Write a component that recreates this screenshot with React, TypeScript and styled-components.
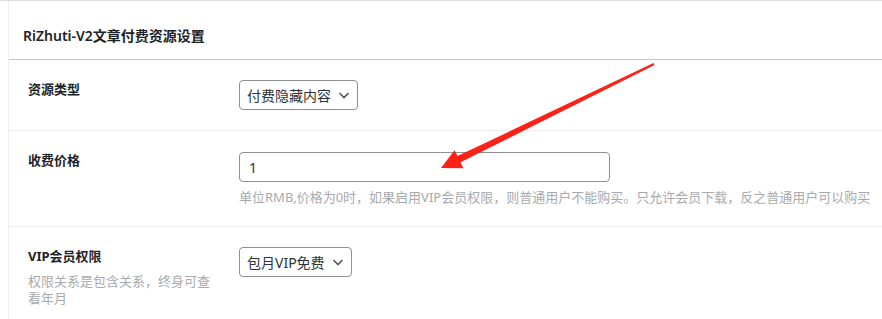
import React from "react";
import styled, { createGlobalStyle } from "styled-components";

const GlobalStyle = createGlobalStyle`
  html, body {
    margin: 0;
    padding: 0;
    background: #ffffff;
  }
  body {
    font-family: "Noto Sans", "Noto Sans CJK SC", sans-serif;
    color: #23282d;
  }
`;

const Page = styled.div`
  position: relative;
  width: 882px;
  height: 319px;
  overflow: hidden;
  border-top: 1px solid #dcdcde;
  box-sizing: border-box;
`;

const Panel = styled.div`
  margin-left: 8px;
  border-left: 1px solid #f0f0f1;
`;

const PanelHeader = styled.h2`
  margin: 0;
  height: 59px;
  box-sizing: border-box;
  padding: 25px 14px 0;
  font-size: 14px;
  line-height: 20px;
  font-weight: 600;
  color: #1d2327;
  border-bottom: 1px solid #c3c4c7;
`;

const Row = styled.div`
  display: grid;
  grid-template-columns: 230px 1fr;
  border-bottom: 1px solid #f0f0f1;
`;

const LabelCell = styled.div`
  padding: 20px 20px 20px 19px;
`;

const Label = styled.div`
  font-size: 13px;
  line-height: 18px;
  font-weight: 700;
  color: #1d2327;
`;

const LabelNote = styled.div`
  margin-top: 8px;
  font-size: 13px;
  line-height: 16.5px;
  color: #a7aaad;
`;

const FieldCell = styled.div`
  padding: 20px 0 20px 0;
`;

const SelectWrap = styled.div`
  position: relative;
  display: inline-block;
`;

const Select = styled.select`
  appearance: none;
  -webkit-appearance: none;
  height: 30px;
  box-sizing: border-box;
  padding: 0 26px 0 7px;
  border: 1px solid #8c8f94;
  border-radius: 4px;
  background: #fff;
  font-family: inherit;
  font-size: 14px;
  color: #2c3338;
`;

const Chevron = styled.svg`
  position: absolute;
  right: 8px;
  top: 10px;
  pointer-events: none;
`;

const TextInput = styled.input`
  display: block;
  width: 371px;
  height: 30px;
  margin-top: 1px;
  box-sizing: border-box;
  padding: 0 9px;
  border: 1px solid #8c8f94;
  border-radius: 4px;
  font-family: inherit;
  font-size: 14px;
  color: #2c3338;
`;

const Description = styled.p`
  margin: 6px 0 0;
  font-size: 13px;
  line-height: 18px;
  color: #a7aaad;
  white-space: nowrap;
`;

const Annotation = styled.svg`
  position: absolute;
  left: 0;
  top: 0;
  pointer-events: none;
`;

interface DropdownProps {
  value: string;
}
const Dropdown = ({ value }: DropdownProps) => (
  <SelectWrap>
    <Select defaultValue={value}>
      <option>{value}</option>
    </Select>
    <Chevron width="12" height="10" viewBox="0 0 12 10">
      <path d="M1.5 3 L6 7.5 L10.5 3" fill="none" stroke="#50575e" strokeWidth="1.6" />
    </Chevron>
  </SelectWrap>
);

export default function App() {
  return (
    <>
      <GlobalStyle />
      <Page>
        <Panel>
          <PanelHeader>RiZhuti-V2文章付费资源设置</PanelHeader>
          <Row>
            <LabelCell>
              <Label>资源类型</Label>
            </LabelCell>
            <FieldCell>
              <Dropdown value="付费隐藏内容" />
            </FieldCell>
          </Row>
          <Row>
            <LabelCell>
              <Label>收费价格</Label>
            </LabelCell>
            <FieldCell>
              <TextInput defaultValue="1" />
              <Description>
                单位RMB,价格为0时，如果启用VIP会员权限，则普通用户不能购买。只允许会员下载，反之普通用户可以购买
              </Description>
            </FieldCell>
          </Row>
          <Row>
            <LabelCell>
              <Label>VIP会员权限</Label>
              <LabelNote>权限关系是包含关系，终身可查看年月</LabelNote>
            </LabelCell>
            <FieldCell>
              <Dropdown value="包月VIP免费" />
            </FieldCell>
          </Row>
        </Panel>
        {/* red annotation arrow drawn over the form */}
        <Annotation width="882" height="319" viewBox="0 0 882 319">
          <polygon
            points="441,167 454.6,149.2 457.5,155.1 653.5,61.9 654.5,64.1 460.5,161.3 463.4,167.2"
            fill="#ff2016"
          />
        </Annotation>
      </Page>
    </>
  );
}
